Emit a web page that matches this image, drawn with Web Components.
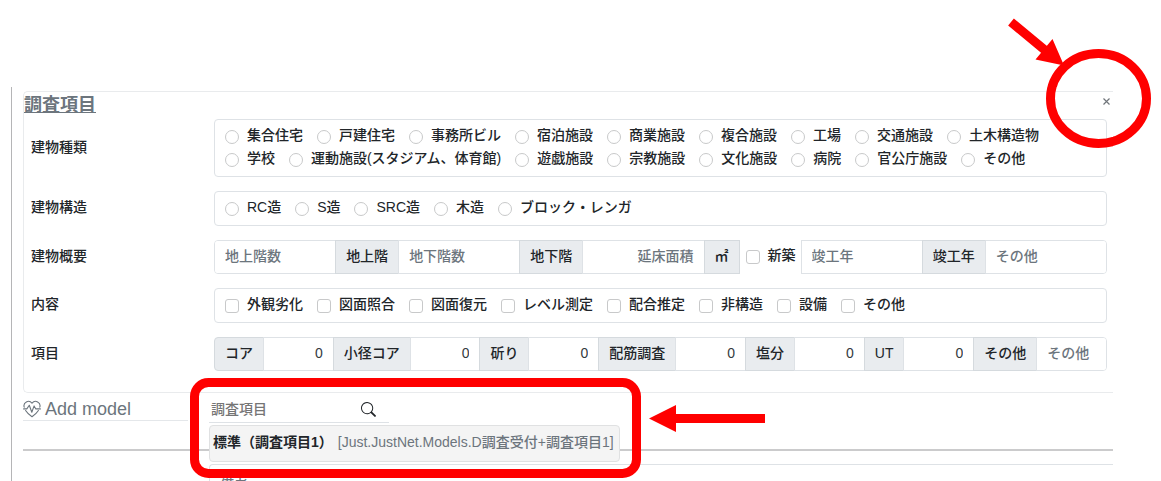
<!DOCTYPE html>
<html lang="ja">
<head>
<meta charset="utf-8">
<meta name="viewport" content="width=device-width, initial-scale=1">
<title>調査項目</title>
<style>
    html {
        height: 100%;
    }
    body {
        margin: 0;
        height: 100%;
        overflow: hidden;
        background: #fff;
        color: #212529;
        font: 500 14px/23px "Liberation Sans", "Noto Sans CJK JP", sans-serif;
        --line: #dee2e6;
        --muted: #6c757d;
        --mark: #ff0000;
    }
</style>
</head>
<body>
<survey-page>
    <survey-panel heading="調査項目">
        <form-row label="建物種類">
            <choice-box type="radio" name="kind" options="集合住宅|戸建住宅|事務所ビル|宿泊施設|商業施設|複合施設|工場|交通施設|土木構造物|学校|運動施設(スタジアム、体育館)|遊戯施設|宗教施設|文化施設|病院|官公庁施設|その他"></choice-box>
        </form-row>
        <form-row label="建物構造">
            <choice-box type="radio" name="structure" options="RC造|S造|SRC造|木造|ブロック・レンガ"></choice-box>
        </form-row>
        <form-row label="建物概要">
            <input-group>
                <text-cell hint="地上階数"></text-cell>
                <unit-cell>地上階</unit-cell>
                <text-cell hint="地下階数"></text-cell>
                <unit-cell>地下階</unit-cell>
                <text-cell hint="延床面積" align="right"></text-cell>
                <unit-cell>㎡</unit-cell>
                <choice-item class="inline" type="checkbox" name="new" label="新築"></choice-item>
                <text-cell hint="竣工年"></text-cell>
                <unit-cell>竣工年</unit-cell>
                <text-cell hint="その他"></text-cell>
            </input-group>
        </form-row>
        <form-row label="内容">
            <choice-box type="checkbox" name="content" options="外観劣化|図面照合|図面復元|レベル測定|配合推定|非構造|設備|その他"></choice-box>
        </form-row>
        <form-row label="項目">
            <input-group>
                <unit-cell>コア</unit-cell>
                <text-cell hint="コア" value="0" align="right"></text-cell>
                <unit-cell>小径コア</unit-cell>
                <text-cell hint="小径コア" value="0" align="right"></text-cell>
                <unit-cell>斫り</unit-cell>
                <text-cell hint="斫り" value="0" align="right"></text-cell>
                <unit-cell>配筋調査</unit-cell>
                <text-cell hint="配筋調査" value="0" align="right"></text-cell>
                <unit-cell>塩分</unit-cell>
                <text-cell hint="塩分" value="0" align="right"></text-cell>
                <unit-cell>UT</unit-cell>
                <text-cell hint="UT" value="0" align="right"></text-cell>
                <unit-cell>その他</unit-cell>
                <text-cell hint="その他"></text-cell>
            </input-group>
        </form-row>
    </survey-panel>
    <model-picker>
        <model-option name="標準（調査項目1）">[Just.JustNet.Models.D調査受付+調査項目1]</model-option>
    </model-picker>
    <note-panel>備考</note-panel>
</survey-page>
<callout-marks></callout-marks>

<script>
const attach = (el, html) => {
    el.attachShadow({ mode: 'open' }).innerHTML = `<style>*{box-sizing:border-box}</style>${html}`;
};

class SurveyPage extends HTMLElement {
    constructor () {
        super();
        attach(this, `
        <style>
            :host {
                display: flex;
                flex-direction: column;
                box-sizing: border-box;
                height: calc(100% - 87px);
                margin: 87px 48px 0 11px;
                padding: 4px 0 0 11px;
                border-left: 1px solid #b5b5b7;
            }
        </style>
        <slot></slot>`);
    }
}

class SurveyPanel extends HTMLElement {
    constructor () {
        super();
        attach(this, `
        <style>
            :host {
                display: block;
                flex: none;
                border: 1px solid #e9ebed;
                border-right: 0;
                border-radius: 5px 0 0 5px;
                padding-bottom: 21px;
            }
            header {
                display: flex;
                justify-content: space-between;
                height: 27px;
            }
            h2 {
                margin: 0;
                font-size: 18px;
                line-height: 26px;
                font-weight: 700;
                color: var(--muted);
                text-decoration: underline;
            }
            button {
                display: flex;
                align-items: center;
                height: 19px;
                padding: 0 3px;
                border: 0;
                background: none;
            }
            .rows {
                display: flex;
                flex-direction: column;
                gap: 14px;
                padding: 0 6px 0 7px;
            }
        </style>
        <header>
            <h2>${this.getAttribute('heading')}</h2>
            <button type="button" aria-label="閉じる">
                <svg width="7" height="7" viewBox="0 0 7 7" stroke="#70757a" stroke-width="1.2" fill="none"><path d="M.5.5l6 6M6.5.5l-6 6"/></svg>
            </button>
        </header>
        <div class="rows"><slot></slot></div>`);
    }
}

class FormRow extends HTMLElement {
    constructor () {
        super();
        attach(this, `
        <style>
            :host {
                display: flex;
                align-items: center;
            }
            .label {
                flex: 0 0 17%;
                padding-bottom: 2px;
            }
            .field {
                flex: 1;
                min-width: 0;
            }
        </style>
        <span class="label">${this.getAttribute('label')}</span>
        <div class="field"><slot></slot></div>`);
    }
}

class ChoiceItem extends HTMLElement {
    constructor () {
        super();
        attach(this, `
        <style>
            :host {
                display: block;
            }
            label {
                display: flex;
                align-items: center;
                gap: 8px;
            }
            input {
                appearance: none;
                flex: none;
                width: 14px;
                height: 14px;
                margin: 3px 0 0;
                border: 1px solid #c8c9ca;
                border-radius: 3px;
                background: #fff;
            }
            input[type=radio] {
                border-radius: 50%;
            }
            input:checked {
                background: #0d6efd;
            }
        </style>
        <label><input type="${this.getAttribute('type')}" name="${this.getAttribute('name')}">${this.getAttribute('label')}</label>`);
    }
}

class ChoiceBox extends HTMLElement {
    constructor () {
        super();
        const type = this.getAttribute('type');
        const name = this.getAttribute('name');
        const items = this.getAttribute('options').split('|');

        attach(this, `
        <style>
            :host {
                display: flex;
                flex-wrap: wrap;
                column-gap: 14px;
                padding: 4px 10px 6px;
                border: 1px solid var(--line);
                border-radius: 4px;
            }
        </style>
        ${items.map((label) => `<choice-item type="${type}" name="${name}" label="${label}"></choice-item>`).join('')}`);
    }
}

class InputGroup extends HTMLElement {
    constructor () {
        super();
        attach(this, `
        <style>
            :host {
                display: flex;
                height: 34px;
            }
            ::slotted(.inline) {
                padding: 4px 6px;
            }
            ::slotted(:first-child) {
                border-radius: 4px 0 0 4px;
            }
            ::slotted(:last-child) {
                border-radius: 0 4px 4px 0;
            }
            ::slotted(:not(:first-child):not(.inline)) {
                margin-left: -1px;
            }
        </style>
        <slot></slot>`);
    }
}

class TextCell extends HTMLElement {
    constructor () {
        super();
        const hint = this.getAttribute('hint');

        attach(this, `
        <style>
            :host {
                display: flex;
                flex: 1;
                min-width: 0;
                overflow: hidden;
                border: 1px solid var(--line);
            }
            input {
                width: 100%;
                min-width: 0;
                padding: 0 10px 2px;
                border: 0;
                outline: 0;
                background: #fff;
                color: #343a40;
                font: inherit;
                text-align: ${this.getAttribute('align') || 'left'};
            }
            input::placeholder {
                color: var(--muted);
                opacity: 1;
            }
        </style>
        <input type="text" aria-label="${hint}" placeholder="${hint}" value="${this.getAttribute('value') || ''}">`);
    }
}

class UnitCell extends HTMLElement {
    constructor () {
        super();
        attach(this, `
        <style>
            :host {
                display: flex;
                align-items: center;
                padding: 0 10px 2px;
                border: 1px solid #d5dade;
                background: #e9ecef;
                white-space: nowrap;
            }
        </style>
        <slot></slot>`);
    }
}

class ModelPicker extends HTMLElement {
    constructor () {
        super();
        attach(this, `
        <style>
            :host {
                display: flex;
                flex: none;
                gap: 21px;
                height: 56px;
                border-bottom: 2px solid #cbcbcc;
            }
            .add {
                display: flex;
                align-items: center;
                gap: 4px;
                width: 165px;
                height: 28px;
                padding: 5px 0 0;
                border: 0;
                border-bottom: 1px solid #e4e7ea;
                background: none;
                color: var(--muted);
                font: 18px/23px "Liberation Sans", sans-serif;
                white-space: nowrap;
            }
            .search {
                position: relative;
                width: 180px;
            }
            .bar {
                display: flex;
                align-items: center;
                height: 30px;
                padding: 4px 13px 0 2px;
                border-bottom: 1px solid var(--line);
            }
            input {
                flex: 1;
                min-width: 0;
                padding: 0;
                border: 0;
                outline: 0;
                background: none;
                font: inherit;
            }
            input::placeholder {
                color: #757575;
            }
            .bar button {
                display: flex;
                padding: 0;
                border: 0;
                background: none;
                color: #212529;
            }
            .menu {
                position: absolute;
                top: 32px;
                left: 0;
                z-index: 1;
            }
        </style>
        <button class="add" type="button">
            <svg width="18" height="18" viewBox="0 0 18 18" fill="none" stroke="currentColor" stroke-width="1.1" stroke-linejoin="round" stroke-linecap="round">
                <path d="M1.2 7.2C-.2 2.4 5.8-.8 9 3.2 12.2-.8 18.2 2.4 16.8 7.2M2.6 10.5C4 12.8 6.3 14.8 9 16.7c2.700-1.900 5-3.900 6.400-6.200"/>
                <path d="M.6 8.900h3.200L6.300 5.300l2.500 6.900 2.300-6.300 1.700 3h4.600"/>
            </svg>
            Add model
        </button>
        <div class="search">
            <div class="bar">
                <input type="text" aria-label="調査項目" placeholder="調査項目">
                <button type="button" aria-label="検索">
                    <svg width="15" height="15" viewBox="0 0 16 16" fill="currentColor"><path d="M11.742 10.344a6.500 6.500 0 1 0-1.397 1.398l3.850 3.850a1 1 0 0 0 1.415-1.415l-3.868-3.833zM12 6.500a5.500 5.500 0 1 1-11 0 5.500 5.500 0 0 1 11 0z"/></svg>
                </button>
            </div>
            <div class="menu"><slot></slot></div>
        </div>`);
    }
}

class ModelOption extends HTMLElement {
    constructor () {
        super();
        attach(this, `
        <style>
            :host {
                display: block;
            }
            button {
                display: flex;
                align-items: center;
                gap: 5px;
                height: 37px;
                padding: 0 5px 2px 3px;
                border: 1px solid #e0e1e2;
                border-radius: 4px;
                background: #f4f4f4;
                color: var(--muted);
                font: inherit;
                white-space: nowrap;
            }
            b {
                color: #212529;
            }
        </style>
        <button type="button"><b>${this.getAttribute('name')}</b><span><slot></slot></span></button>`);
    }
}

class NotePanel extends HTMLElement {
    constructor () {
        super();
        attach(this, `
        <style>
            :host {
                display: block;
                flex: 1;
                min-height: 0;
                overflow: hidden;
                margin: 13px 0 0 186px;
                padding: 9px 10px 0;
                border: 1px solid var(--line);
                border-width: 1px 0 0 1px;
                border-radius: 4px 0 0 0;
                color: var(--muted);
            }
        </style>
        <slot></slot>`);
    }
}

// red annotations drawn over the form
class CalloutMarks extends HTMLElement {
    constructor () {
        super();
        attach(this, `
        <style>
            :host {
                position: absolute;
                inset: 0;
                z-index: 2;
                overflow: hidden;
                pointer-events: none;
                color: var(--mark);
            }
            svg {
                display: block;
            }
        </style>
        <svg width="1161" height="481" viewBox="0 0 1161 481" fill="none" stroke="currentColor" stroke-width="9">
            <ellipse cx="1098.500" cy="98.500" rx="48" ry="45"/>
            <rect x="194.500" y="382.500" width="442" height="91" rx="14"/>
            <path d="M1011 22l35 29M765 418.500h-90"/>
            <path fill="currentColor" stroke="none" d="M1064 65.500l-28.500-6 17-20.500zM649 418.500l27-13.500v27z"/>
        </svg>`);
    }
}

customElements.define('survey-page', SurveyPage);
customElements.define('survey-panel', SurveyPanel);
customElements.define('form-row', FormRow);
customElements.define('choice-item', ChoiceItem);
customElements.define('choice-box', ChoiceBox);
customElements.define('input-group', InputGroup);
customElements.define('text-cell', TextCell);
customElements.define('unit-cell', UnitCell);
customElements.define('model-picker', ModelPicker);
customElements.define('model-option', ModelOption);
customElements.define('note-panel', NotePanel);
customElements.define('callout-marks', CalloutMarks);
</script>
</body>
</html>
